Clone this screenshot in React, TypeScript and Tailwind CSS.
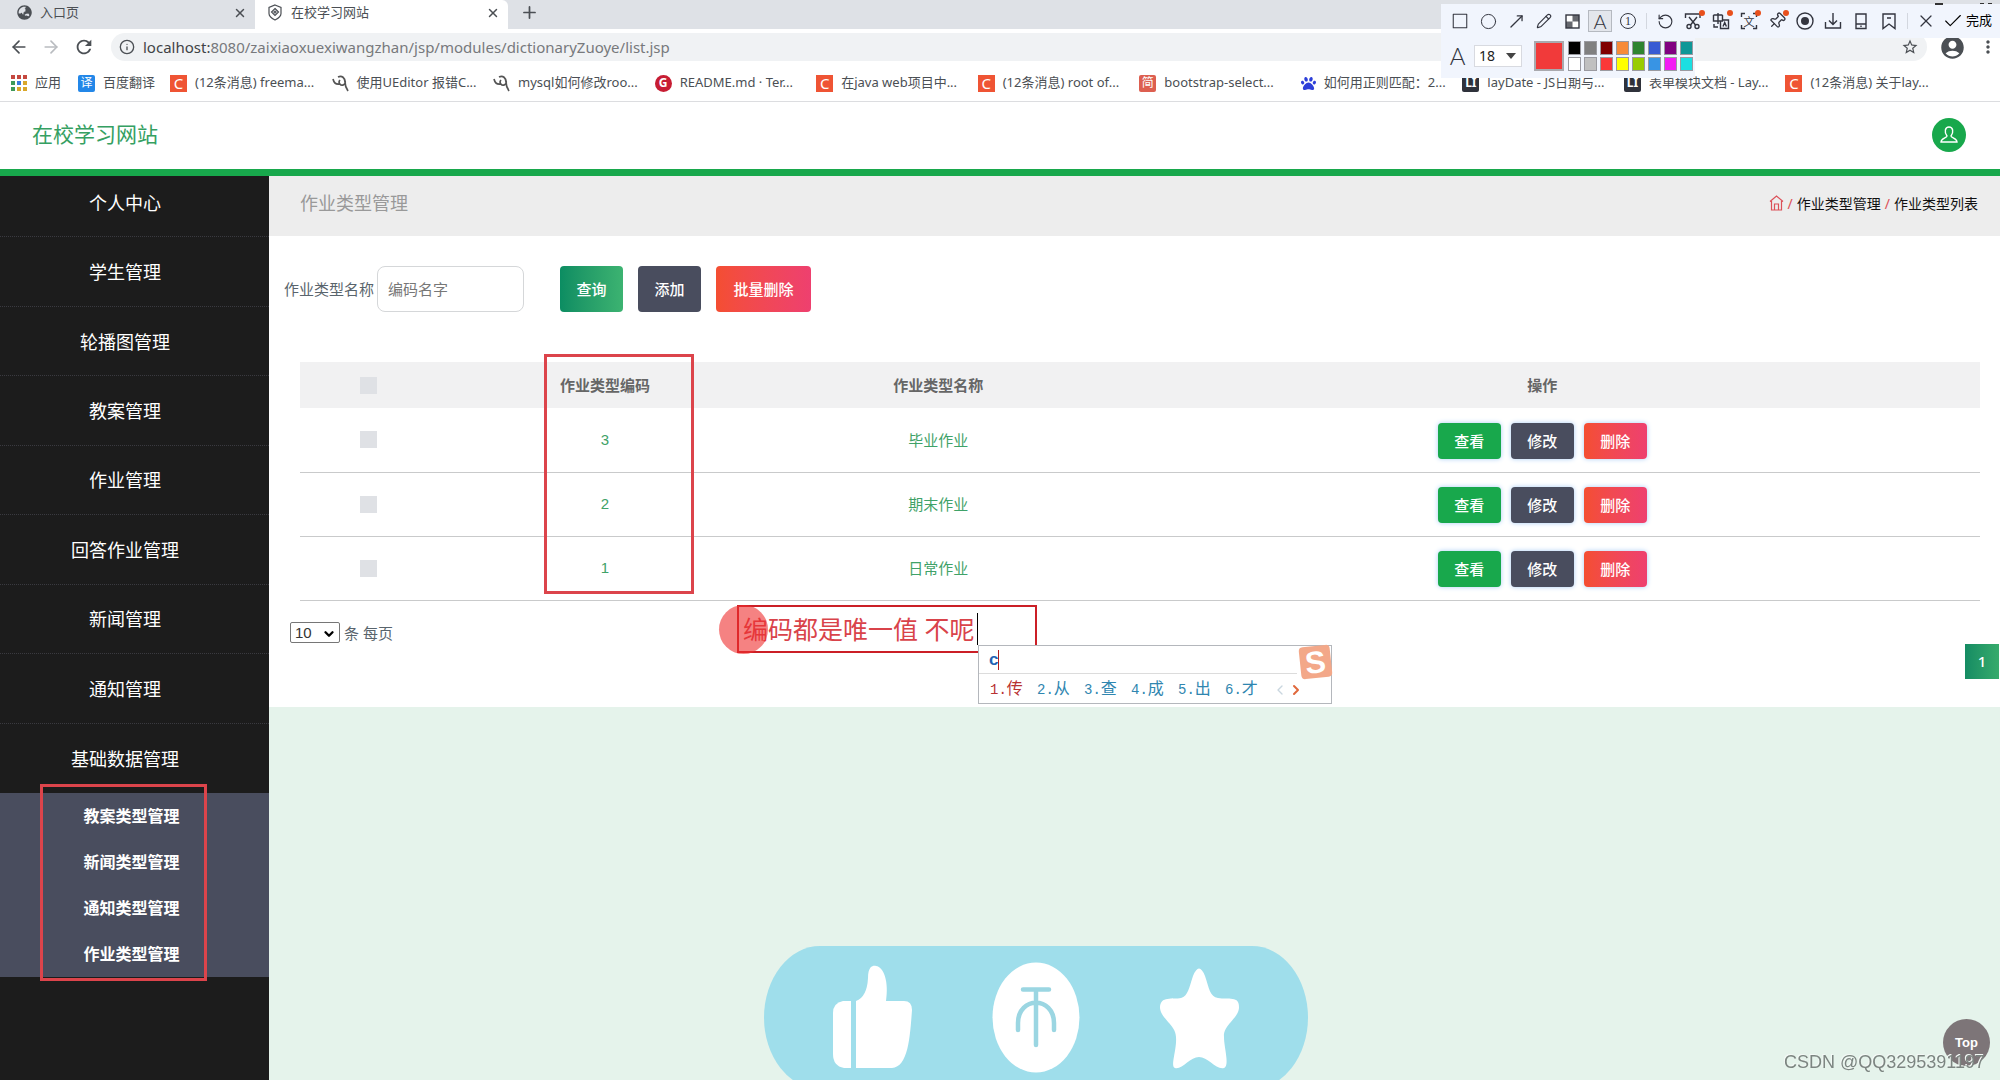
import React from 'react';
import {
  ArrowLeft,
  ArrowRight,
  Check,
  ChevronDown,
  ChevronLeft,
  ChevronRight,
  Circle,
  Info,
  MoveUpRight,
  Pencil,
  Pin,
  Plus,
  RotateCcw,
  Square,
  X,
} from 'lucide-react';
import { FaGlobeAsia, FaPaw } from 'react-icons/fa';
import { MdAccountCircle, MdMoreVert, MdRefresh, MdStarBorder } from 'react-icons/md';

const menu = [
  '个人中心',
  '学生管理',
  '轮播图管理',
  '教案管理',
  '作业管理',
  '回答作业管理',
  '新闻管理',
  '通知管理',
  '基础数据管理',
];

const subMenu = ['教案类型管理', '新闻类型管理', '通知类型管理', '作业类型管理'];

const rows = [
  { code: 3, name: '毕业作业' },
  { code: 2, name: '期末作业' },
  { code: 1, name: '日常作业' },
];

const bookmarks = [
  { icon: 'csdn', label: '(12条消息) freema...' },
  { icon: 'cnblogs', label: '使用UEditor 报错C...' },
  { icon: 'cnblogs', label: 'mysql如何修改roo...' },
  { icon: 'gitee', label: 'README.md · Ter...' },
  { icon: 'csdn', label: '在java web项目中...' },
  { icon: 'csdn', label: '(12条消息) root of...' },
  { icon: 'jian', label: 'bootstrap-select...' },
  { icon: 'baidu', label: '如何用正则匹配：2...' },
  { icon: 'layui', label: 'layDate - JS日期与...' },
  { icon: 'layui', label: '表单模块文档 - Lay...' },
  { icon: 'csdn', label: '(12条消息) 关于lay...' },
];

const swatches = [
  'bg-black', 'bg-[#808080]', 'bg-[#800000]', 'bg-[#f78b38]', 'bg-[#2f8430]', 'bg-[#385ad3]', 'bg-[#800080]', 'bg-[#0f9797]',
  'bg-white', 'bg-[#c0c0c0]', 'bg-[#fb3838]', 'bg-[#ffff00]', 'bg-[#99cc00]', 'bg-[#3894e4]', 'bg-[#f31bf3]', 'bg-[#1bdfe1]',
];

const candidates = ['传', '从', '查', '成', '出', '才'];

function AppsIcon() {
  const colors = ['#c5483f', '#c5483f', '#c5483f', '#3f9a5b', '#3a7be0', '#d9a72b', '#3f9a5b', '#d9a72b', '#d9a72b'];
  return (
    <svg width="16" height="16" viewBox="0 0 16 16">
      {colors.map((c, i) => (
        <rect key={i} x={(i % 3) * 6} y={Math.floor(i / 3) * 6} width="4" height="4" fill={c} />
      ))}
    </svg>
  );
}

function ShieldIcon() {
  return (
    <svg width="16" height="17" viewBox="0 0 16 17" fill="none" stroke="currentColor" strokeWidth="1.2">
      <path d="M8 1l6 2.500v6c0 3-3 5-6 6.500-3-1.500-6-3.500-6-6.500v-6z" />
      <path d="M8 4.500 11.500 8 8 11.500 4.500 8z" />
      <circle cx="8" cy="8" r="1" />
    </svg>
  );
}

function Favicon({ kind }: { kind: string }) {
  const tile = 'flex size-[17px] shrink-0 items-center justify-center leading-none text-white';
  if (kind === 'csdn') return <span className={`${tile} bg-[#ef5434] text-[15px]`}>C</span>;
  if (kind === 'gitee') return <span className={`${tile} rounded-full bg-[#c71d33] text-[12px] font-bold`}>G</span>;
  if (kind === 'jian') return <span className={`${tile} rounded-xs bg-[#dd5f50] text-[12px]`}>简</span>;
  if (kind === 'layui') return <span className={`${tile} rounded-xs bg-[#2f323b] text-[12px] font-bold`}>LI</span>;
  if (kind === 'baidu') return <FaPaw className="size-[15px] shrink-0 text-[#2d3fd9]" />;
  return (
    <svg className="size-[17px] shrink-0" viewBox="0 0 17 17" fill="none" stroke="#555" strokeWidth="1.7">
      <path d="M1 4c1 4 3 6 7 5M8 5a3 3 0 1 0 5 1M6 2c4-2 7 1 7 5 0 4 1 6 3 9" />
    </svg>
  );
}

function BrowserChrome() {
  return (
    <div className="text-[#4b4f54]">
      {/* Tab strip */}
      <div className="flex h-[29px] bg-[#dee1e6] text-[13px]">
        <div className="flex w-[255px] items-center pr-2 pb-1 pl-[17px]">
          <FaGlobeAsia className="size-[15px]" />
          <span className="ml-2 flex-1">入口页</span>
          <button aria-label="关闭标签页"><X size={14} strokeWidth={2.5} /></button>
        </div>
        <div className="flex w-[253px] items-center rounded-tr-md bg-white pr-2 pb-1 pl-3">
          <ShieldIcon />
          <span className="ml-2 flex-1">在校学习网站</span>
          <button aria-label="关闭标签页"><X size={14} strokeWidth={2.5} /></button>
        </div>
        <button aria-label="新标签页" className="mb-1 ml-3"><Plus size={19} strokeWidth={2.2} /></button>
      </div>

      {/* Address bar */}
      <div className="flex h-9 items-center bg-white pr-0.5">
        <button aria-label="后退" className="ml-[9px]"><ArrowLeft size={20} /></button>
        <button aria-label="前进" className="ml-3 text-[#b9bcc0]"><ArrowRight size={20} /></button>
        <button aria-label="刷新" className="ml-3"><MdRefresh size={22} /></button>
        <div className="ml-4 flex h-7 flex-1 items-center rounded-full bg-[#f0f2f4] px-2">
          <Info size={16} />
          <span className="ml-2 text-[15px] text-[#77797c]">
            <span className="text-[#404346]">localhost:</span>8080/zaixiaoxuexiwangzhan/jsp/modules/dictionaryZuoye/list.jsp
          </span>
          <MdStarBorder size={18} className="ml-auto" />
        </div>
        <MdAccountCircle size={27} className="ml-3" />
        <MdMoreVert size={20} className="ml-3" />
      </div>

      {/* Bookmarks */}
      <div className="flex h-[37px] items-center border-b border-[#dcdde0] bg-white pl-[11px] text-[13px] whitespace-nowrap">
        <a href="#" className="flex w-[67px] items-center gap-2">
          <AppsIcon />
          应用
        </a>
        <a href="#" className="flex w-[92px] items-center gap-2">
          <span className="flex size-[17px] items-center justify-center rounded-xs bg-[#2387e8] text-[12px] text-white">译</span>
          百度翻译
        </a>
        <div className="grid w-[1777px] grid-cols-11">
          {bookmarks.map((b, i) => (
            <a key={i} href="#" className="flex items-center gap-2">
              <Favicon kind={b.icon} />
              {b.label}
            </a>
          ))}
        </div>
      </div>
    </div>
  );
}

function ToolButton({ label, badge, active, children }: { label: string; badge?: boolean; active?: boolean; children: React.ReactNode }) {
  return (
    <button aria-label={label} className="relative flex w-7 items-center justify-center">
      <span className={`flex items-center justify-center ${active ? 'h-[22px] w-6 border border-[#b5b9c0] bg-[#e3e6ec]' : ''}`}>
        {children}
      </span>
      {badge && <span className="absolute -top-0.5 right-0.5 size-1.5 rounded-full bg-[#e8501c]" />}
    </button>
  );
}

function ToolSvg({ d, children }: { d: string; children?: React.ReactNode }) {
  return (
    <svg width="18" height="18" viewBox="0 0 18 18" fill="none" stroke="currentColor" strokeWidth="1.4">
      <path d={d} />
      {children}
    </svg>
  );
}

function CaptureToolbar() {
  return (
    <div className="absolute top-1 right-0 z-20 text-[#33353f]">
      {/* Window buttons peeking out above the bar */}
      <span className="absolute -top-px right-[57px] h-0.5 w-2 bg-[#333]" />
      <span className="absolute -top-px right-2 flex w-3 justify-between">
        <i className="h-px w-1 bg-[#333]" />
        <i className="h-px w-1 bg-[#333]" />
      </span>
      <div className="flex h-[34px] w-[559px] items-center bg-[#f1f5fd] pl-[5px]">
        <ToolButton label="矩形">
          <Square size={18} strokeWidth={1.4} className="[&>rect]:[rx:0]" />
        </ToolButton>
        <ToolButton label="椭圆"><Circle size={17} strokeWidth={1.4} /></ToolButton>
        <ToolButton label="箭头"><MoveUpRight size={19} strokeWidth={1.6} /></ToolButton>
        <ToolButton label="画笔"><Pencil size={16} strokeWidth={1.7} /></ToolButton>
        <ToolButton label="马赛克">
          <svg width="15" height="15" viewBox="0 0 15 15">
            <rect x="1" y="1" width="13" height="13" fill="#fff" stroke="currentColor" strokeWidth="1.4" />
            <path d="M7.500 1H14v6.500H7.500zM1 7.500h6.500V14H1z" fill="currentColor" opacity="0.75" />
          </svg>
        </ToolButton>
        <ToolButton label="文字" active>
          <span className="font-['Lato',sans-serif] text-[20px] leading-none font-light">A</span>
        </ToolButton>
        <ToolButton label="序号">
          <span className="flex size-4 items-center justify-center rounded-full border border-[#33353f] font-['Liberation_Serif',serif] text-[12px] leading-none">1</span>
        </ToolButton>
        <span className="mx-1 h-4 w-px bg-[#d3d7df]" />
        <ToolButton label="撤销"><RotateCcw size={17} strokeWidth={1.6} /></ToolButton>
        <ToolButton label="裁剪" badge>
          <ToolSvg d="M1.500 6V2H16v4M5 5l6.500 8M13 5 6.500 13">
            <circle cx="5" cy="14.500" r="2" />
            <circle cx="13" cy="14.500" r="2" />
          </ToolSvg>
        </ToolButton>
        <ToolButton label="翻译" badge>
          <ToolSvg d="M1.500 3h9M1.500 3v6h9V3M6 1v11M8.500 9v7.500H16.500V8H11M2 12v3h4M11 14.500l1.700-4 1.700 4" />
        </ToolButton>
        <ToolButton label="识别文字" badge>
          <span className="relative flex items-center justify-center">
            <ToolSvg d="M1.500 5V1.500H5M13 1.500h3.500V5M16.500 13v3.500H13M5 16.500H1.500V13" />
            <span className="absolute text-[11px] leading-none">文</span>
          </span>
        </ToolButton>
        <ToolButton label="固定" badge><Pin size={18} strokeWidth={1.7} className="rotate-45" /></ToolButton>
        <ToolButton label="录制">
          <ToolSvg d="">
            <circle cx="9" cy="9" r="8" />
            <circle cx="9" cy="9" r="4" fill="currentColor" stroke="none" />
          </ToolSvg>
        </ToolButton>
        <ToolButton label="下载"><ToolSvg d="M9 1v11M5 8.500l4 4 4-4M1.500 10v6h15v-6" /></ToolButton>
        <ToolButton label="发送到手机"><ToolSvg d="M4 2h10v14.500H4zM4 12h10M9 13.500v1.500" /></ToolButton>
        <ToolButton label="收藏"><ToolSvg d="M3 2h12v14.500l-6-4.500-6 4.500zM7 6h4" /></ToolButton>
        <span className="mx-1 h-4 w-px bg-[#d3d7df]" />
        <ToolButton label="关闭"><X size={20} strokeWidth={1.5} /></ToolButton>
        <button className="ml-0.5 flex items-center gap-0.5 text-[13px] text-black">
          <Check size={22} strokeWidth={1.2} />
          完成
        </button>
      </div>
      <div className="flex h-10 w-[254px] items-center bg-[#f1f5fd] pb-1 pl-2">
        <span className="w-[17px] text-center font-['Lato',sans-serif] text-[24px] leading-none font-light">A</span>
        <div className="relative ml-2">
          <select aria-label="字号" className="block h-[22px] w-[48px] appearance-none border border-[#d8dae0] bg-white pl-1 text-[14px] leading-none text-[#222]">
            <option>18</option>
          </select>
          <span className="pointer-events-none absolute top-2 right-1.5 border-x-[5px] border-t-[6px] border-x-transparent border-t-[#444]" />
        </div>
        <button aria-label="当前颜色" className="ml-3 size-[30px] border-2 border-[#a9a9ae] bg-[#f13a3a]" />
        <div className="ml-1 grid grid-cols-8 gap-x-[3px] gap-y-[2px]">
          {swatches.map((color) => (
            <button key={color} aria-label="颜色" className={`h-3.5 w-[13px] border border-[#9a9aa0] ${color}`} />
          ))}
        </div>
      </div>
    </div>
  );
}

function Sidebar() {
  return (
    <aside className="w-[269px] shrink-0 overflow-hidden bg-[#1c1c1c] text-white">
      <ul className="-mt-2 grid h-[625px] auto-rows-fr text-[18px]">
        {menu.map((item) => (
          <li key={item} className="border-b border-dotted border-[#3a3a40] last:border-0">
            <a href="#" className="flex h-full items-center justify-center pt-0.5 pr-[19px]">{item}</a>
          </li>
        ))}
      </ul>
      <div className="relative bg-[#494d5e]">
        <ul className="text-[16px] font-bold">
          {subMenu.map((item) => (
            <li key={item}>
              <a href="#" className="flex h-[46px] items-center justify-center pr-1.5">{item}</a>
            </li>
          ))}
        </ul>
        <div className="pointer-events-none absolute -top-[9px] -bottom-1 left-10 w-[167px] border-3 border-[#dc444b]" />
      </div>
    </aside>
  );
}

function TypeTable() {
  const action = 'h-9 w-[63px] rounded-sm text-[15px] font-medium text-white shadow-[0_0_5px_#a9cdf5]';
  const box = 'block mx-auto size-[17px] appearance-none bg-[#dfe1e5]';
  return (
    <div className="relative mt-[50px] mr-5 ml-[31px]">
      <table className="w-full table-fixed text-center text-[15px]">
        <colgroup>
          <col className="w-[8.2%]" />
          <col className="w-[19.9%]" />
          <col className="w-[19.8%]" />
          <col />
        </colgroup>
        <thead>
          <tr className="h-[46px] bg-[#f1f1f2] text-[#666]">
            <th><input type="checkbox" aria-label="全选" className={box} /></th>
            <th className="font-bold">作业类型编码</th>
            <th className="font-bold">作业类型名称</th>
            <th className="font-bold">操作</th>
          </tr>
        </thead>
        <tbody>
          {rows.map((row) => (
            <tr key={row.code} className="h-16 border-b border-[#c9cacb] text-[#3fa268]">
              <td><input type="checkbox" aria-label={row.name} className={box} /></td>
              <td className="font-['Liberation_Sans',sans-serif]">{row.code}</td>
              <td>{row.name}</td>
              <td>
                <div className="flex justify-center gap-[10px] pt-0.5">
                  <button className={`${action} bg-[#18a84c]`}>查看</button>
                  <button className={`${action} bg-[#494d5e]`}>修改</button>
                  <button className={`${action} bg-linear-to-r from-[#f44e31] to-[#ee406f]`}>删除</button>
                </div>
              </td>
            </tr>
          ))}
        </tbody>
      </table>
      <div className="pointer-events-none absolute -top-2 left-[244px] h-[240px] w-[150px] border-3 border-[#dc444b]" />
    </div>
  );
}

function ImeNote() {
  return (
    <div className="absolute top-[429px] left-[468px] z-10">
      <div className="flex h-12 w-[300px] items-center border-2 border-[#cb1f26] pl-1 text-[25px] leading-none whitespace-nowrap text-[#d9434a]">
        编码都是唯一值 不呢
        <span className="ml-0.5 h-8 w-px bg-black" />
      </div>
      <div className="absolute top-0 -left-[18px] size-[49px] rounded-full bg-[#ee2f2f]/60" />
      <div className="absolute top-[40px] left-[241px] h-[59px] w-[354px] border border-[#b4b7bc] bg-white">
        <div className="mr-[34px] flex h-7 items-center border-b border-[#dcdcdc] pl-[10px]">
          <span className="font-['Liberation_Sans',sans-serif] text-[17px] font-bold text-[#2463b4]">c</span>
          <span className="h-5 w-px bg-[#b01f1f]" />
        </div>
        <ol className="flex h-[29px] items-center pt-0.5 pl-[11px] font-['Liberation_Mono','Noto_Sans_CJK_SC',monospace] text-[16px]">
          {candidates.map((c, i) => (
            <li key={c} className={`w-[47px] whitespace-nowrap ${i === 0 ? 'text-[#b83232]' : 'text-[#2f86b0]'}`}>
              <span className="text-[14px]">{i + 1}.</span>{c}
            </li>
          ))}
          <li className="flex">
            <ChevronLeft size={16} className="text-[#c9d6df]" />
            <ChevronRight size={16} strokeWidth={3} className="text-[#e0683c]" />
          </li>
        </ol>
        <span className="absolute top-0 right-0 flex h-8 w-[31px] -rotate-6 items-center justify-center rounded-sm bg-[#f3a889] font-['Liberation_Sans',sans-serif] text-[31px] leading-none font-bold text-white">
          S
        </span>
      </div>
    </div>
  );
}

function ReactionPill() {
  return (
    <svg className="fixed bottom-0 left-[764px] z-10" width="544" height="134" viewBox="0 0 544 134">
      <rect width="544" height="143" rx="56" ry="71.500" fill="#9fdeeb" />
      <g fill="#fff">
        <path d="M79 55H87V122H80Q69 120 69 108V67Q69 57 79 55z" />
        <path d="M92 55Q103 51 104 32C104 17 112 20 112 20C120 21 125 36 122 55H140Q148 55 148 64C146 92 144 121 128 122H92z" />
        <ellipse cx="272" cy="71.500" rx="43.500" ry="55" />
        <path d="M429 30Q435 15 441 30C445 42 446 51 454 52C464 54 476 49 475 62C474 73 459 79 460 91C460 102 466 120 460 122C452 124 444 111 435 111C426 111 418 124 411 122C406 120 413 104 412 91C412 79 397 73 396 62C396 49 409 54 417 52C424 50 425 42 429 30z" />
      </g>
      <g fill="none" stroke="#9bd6e2" strokeWidth="4.500" strokeLinecap="round">
        <path d="M259 43.500H285M272 46V99M254 84V77C254 50 290 50 290 77V84" />
      </g>
    </svg>
  );
}

export default function App() {
  return (
    <div className="relative flex min-h-screen flex-col overflow-x-hidden bg-[#e5f3eb] font-['Noto_Sans','Noto_Sans_CJK_SC',sans-serif]">
      <BrowserChrome />
      <CaptureToolbar />

      <header className="flex h-[74px] items-center justify-between border-b-[7px] border-[#18a84c] bg-white pr-[34px] pb-0.5 pl-8">
        <h1 className="text-[21px] text-[#35a062]">在校学习网站</h1>
        <button aria-label="用户" className="flex size-[34px] items-center justify-center rounded-full bg-[#18a84c] text-white">
          <svg width="20" height="20" viewBox="0 0 20 20" fill="none" stroke="currentColor" strokeWidth="1.400">
            <path d="M8 11C5 7 6 2 10 2s5 5 2 9c0 2 6 2 6 6H2c0-4 6-4 6-6z" />
          </svg>
        </button>
      </header>

      <div className="flex flex-1">
        <Sidebar />
        <main className="relative min-w-0 flex-1">
          <div className="flex h-[60px] items-center justify-between bg-[#ededed] pr-[22px] pb-1.5 pl-[31px]">
            <h2 className="text-[18px] text-[#999]">作业类型管理</h2>
            <nav className="flex items-center gap-1 text-[14px] text-[#111]">
              <a href="#" aria-label="首页" className="text-[#dc5058]">
                <svg width="15" height="16" viewBox="0 0 15 16" fill="none" stroke="currentColor" strokeWidth="1.200">
                  <path d="M1 6.500 7.500 1 14 6.500M2.500 6v9h10V6M5.500 15V9h4v6" />
                </svg>
              </a>
              <span className="text-[#dc5058]">/</span>
              <a href="#">作业类型管理</a>
              <span className="text-[#dc5058]">/</span>
              <span>作业类型列表</span>
            </nav>
          </div>

          <section className="h-[471px] bg-white pt-[30px]">
            <form className="flex h-[46px] items-center pl-[15px] text-[15px] text-[#59646c]" onSubmit={(e) => e.preventDefault()}>
              <label htmlFor="type-name">作业类型名称</label>
              <input
                id="type-name"
                placeholder="编码名字"
                className="ml-[3px] h-full w-[147px] rounded-lg border border-[#d5d7d9] px-[10px] placeholder:text-[#777]"
              />
              <div className="ml-9 flex h-full gap-[15px] text-[15px] font-medium text-white">
                <button className="w-[63px] rounded-sm bg-linear-to-r from-[#0b8d62] to-[#3cb371]">查询</button>
                <button className="w-[63px] rounded-sm bg-[#494d5e]">添加</button>
                <button className="w-[95px] rounded-sm bg-linear-to-r from-[#f44e31] to-[#ee406f]">批量删除</button>
              </div>
            </form>

            <TypeTable />

            <div className="flex items-start justify-between pl-[21px]">
              <label className="relative mt-5 flex items-center gap-1 text-[15px] leading-6 text-[#59646c]">
                <select className="h-[21px] w-[50px] appearance-none rounded-xs border border-[#767676] bg-white pl-1 font-['Liberation_Sans',sans-serif] text-[15px] leading-none text-[#333]">
                  <option>10</option>
                </select>
                <ChevronDown size={14} strokeWidth={4} className="pointer-events-none absolute top-1.5 left-8 text-black" />
                条 每页
              </label>
              <button className="mt-[43px] mr-px h-[35px] w-[34px] bg-linear-to-r from-[#148c63] to-[#36ab6c] text-[15px] font-medium text-white">1</button>
            </div>
          </section>

          <ImeNote />
        </main>
      </div>

      <ReactionPill />
      <button className="fixed right-[10px] bottom-[14px] z-10 size-[47px] rounded-full bg-[#7d7578] font-['Liberation_Sans',sans-serif] text-[13px] font-bold text-white">
        Top
      </button>
      <span className="pointer-events-none fixed right-[15px] bottom-1 z-20 font-['Liberation_Sans',sans-serif] text-[18px] text-[#7c8581] [text-shadow:-1px_-1px_0_#f4f9f6]">
        CSDN @QQ3295391197
      </span>
    </div>
  );
}
